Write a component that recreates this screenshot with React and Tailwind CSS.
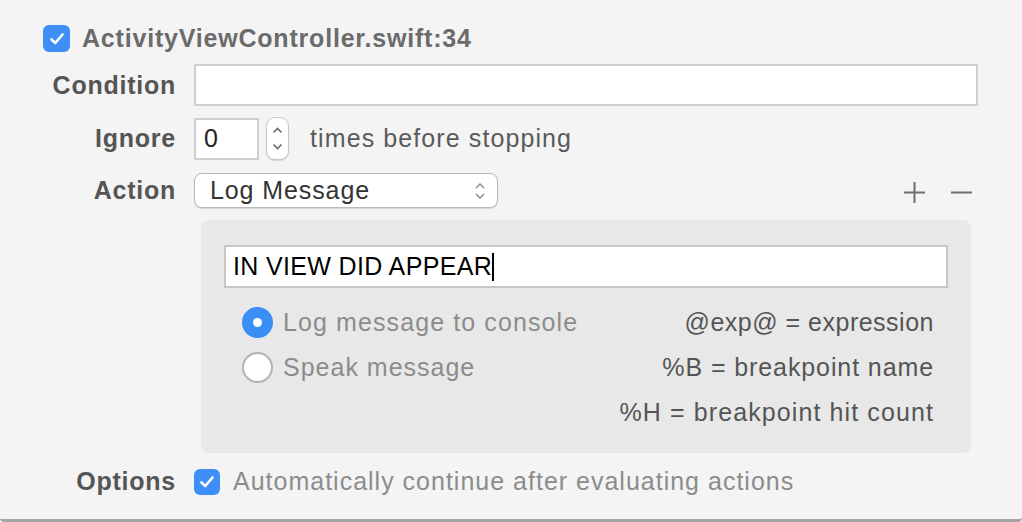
import React from 'react';

const font = { fontFamily: '"Liberation Sans", Arial, sans-serif' };

const Check = ({ size = 27 }) => (
    <div
        className="flex items-center justify-center rounded-[6px] bg-[#3d8ef6] shrink-0"
        style={{ width: size, height: size }}
    >
        <svg width="16" height="14" viewBox="0 0 16 14" fill="none">
            <path d="M2.5 7.5 L6.3 11 L13.5 2.5" stroke="white" strokeWidth="2.6" strokeLinecap="round" strokeLinejoin="round" />
        </svg>
    </div>
);

const Radio = ({ on }) =>
    on ? (
        <div className="w-[31px] h-[31px] rounded-full bg-[#3a8ff5] flex items-center justify-center shrink-0">
            <div className="w-[9px] h-[9px] rounded-full bg-white"></div>
        </div>
    ) : (
        <div className="w-[31px] h-[31px] rounded-full bg-white border-2 border-[#b3b3b3] shrink-0"></div>
    );

const Label = ({ children }) => (
    <div className="text-right font-bold text-[25px] tracking-[0.75px] text-[#555555] leading-none">{children}</div>
);

export default function App() {
    return (
        <div
            className="w-[1022px] h-[522px] bg-[#f4f4f4] border-b-[3px] border-[#a5a5a5] rounded-b-[4px] overflow-hidden"
            style={font}
        >
            {/* Title */}
            <div className="flex items-center gap-[12px] pl-[43px] pt-[25px] h-[52px]">
                <Check />
                <span className="font-bold text-[25px] tracking-[0.8px] text-[#6b6b6b] leading-none">ActivityViewController.swift:34</span>
            </div>

            <div className="grid grid-cols-[176px_1fr] gap-x-[18px] pr-[44px]">
                {/* Condition */}
                <div className="flex items-center justify-end h-[42px] mt-[12px]">
                    <Label>Condition</Label>
                </div>
                <div className="h-[42px] mt-[12px] bg-white border-2 border-[#cfcfcf]"></div>

                {/* Ignore */}
                <div className="flex items-center justify-end h-[43px] mt-[11px]">
                    <Label>Ignore</Label>
                </div>
                <div className="flex items-center h-[43px] mt-[11px]">
                    <div className="w-[65px] h-[42px] bg-white border-2 border-[#cfcfcf] flex items-center pl-[8px] text-[25px] text-[#222]">
                        0
                    </div>
                    <div className="ml-[7px] w-[23px] h-[43px] rounded-[9px] bg-white border border-[#c8c8c8] shadow-[0_1px_1px_rgba(0,0,0,0.15)] flex flex-col items-center justify-center gap-[9px]">
                        <svg width="11" height="7" viewBox="0 0 11 7" fill="none">
                            <path d="M1.5 5.5 L5.5 1.5 L9.5 5.5" stroke="#6a6a6a" strokeWidth="1.6" />
                        </svg>
                        <svg width="11" height="7" viewBox="0 0 11 7" fill="none">
                            <path d="M1.5 1.5 L5.5 5.5 L9.5 1.5" stroke="#6a6a6a" strokeWidth="1.6" />
                        </svg>
                    </div>
                    <span className="ml-[21px] text-[25px] tracking-[1.1px] text-[#5a5a5a] leading-none">times before stopping</span>
                </div>

                {/* Action */}
                <div className="flex items-center justify-end h-[35px] mt-[13px]">
                    <Label>Action</Label>
                </div>
                <div className="flex items-center justify-between h-[35px] mt-[13px] pr-[6px]">
                    <div className="w-[304px] h-[35px] rounded-[8px] bg-white border border-[#b9b9b9] shadow-[0_1px_1px_rgba(0,0,0,0.12)] flex items-center justify-between pl-[15px] pr-[11px]">
                        <span className="text-[25px] tracking-[0.9px] text-[#333] leading-none">Log Message</span>
                        <svg width="12" height="22" viewBox="0 0 12 22" fill="none">
                            <path d="M2 8 L6 4 L10 8" stroke="#8a8a8a" strokeWidth="1.4" />
                            <path d="M2 14 L6 18 L10 14" stroke="#8a8a8a" strokeWidth="1.4" />
                        </svg>
                    </div>
                    <div className="flex items-center gap-[26px] mt-[4px]">
                        <svg width="21" height="21" viewBox="0 0 21 21">
                            <path d="M10.5 0 V21 M0 10.5 H21" stroke="#6e6e6e" strokeWidth="2" />
                        </svg>
                        <svg width="21" height="21" viewBox="0 0 21 21">
                            <path d="M0 10.5 H21" stroke="#6e6e6e" strokeWidth="2" />
                        </svg>
                    </div>
                </div>

                {/* Log message box */}
                <div></div>
                <div className="mt-[12px] ml-[7px] mr-[7px] h-[233px] rounded-[8px] bg-[#e8e8e8] px-[23px] pt-[25px]">
                    <div className="h-[43px] bg-white border-2 border-[#c6c6c6] flex items-center pl-[7px] text-[25px] tracking-[0.35px] text-black leading-none">
                        IN VIEW DID APPEAR
                        <span className="inline-block w-[2px] h-[28px] bg-black"></span>
                    </div>
                    <div className="mt-[12px] grid grid-cols-2 grid-rows-[45px_45px_45px] text-[25px] leading-none">
                        <div className="flex items-center gap-[10px] pl-[18px]">
                            <Radio on />
                            <span className="tracking-[1.1px] text-[#8c8c8c]">Log message to console</span>
                        </div>
                        <div className="flex items-center justify-end pr-[14px] tracking-[0.5px] text-[#555]">
                            @exp@ = expression
                        </div>
                        <div className="flex items-center gap-[10px] pl-[18px]">
                            <Radio />
                            <span className="tracking-[1px] text-[#8c8c8c]">Speak message</span>
                        </div>
                        <div className="flex items-center justify-end pr-[14px] tracking-[0.9px] text-[#555]">
                            %B = breakpoint name
                        </div>
                        <div></div>
                        <div className="flex items-center justify-end pr-[14px] tracking-[1.1px] text-[#555]">
                            %H = breakpoint hit count
                        </div>
                    </div>
                </div>

                {/* Options */}
                <div className="flex items-center justify-end h-[27px] mt-[15px]">
                    <Label>Options</Label>
                </div>
                <div className="flex items-center gap-[13px] h-[27px] mt-[15px]">
                    <Check size={26} />
                    <span className="text-[25px] tracking-[1px] text-[#8c8c8c] leading-none">Automatically continue after evaluating actions</span>
                </div>
            </div>
        </div>
    );
}
